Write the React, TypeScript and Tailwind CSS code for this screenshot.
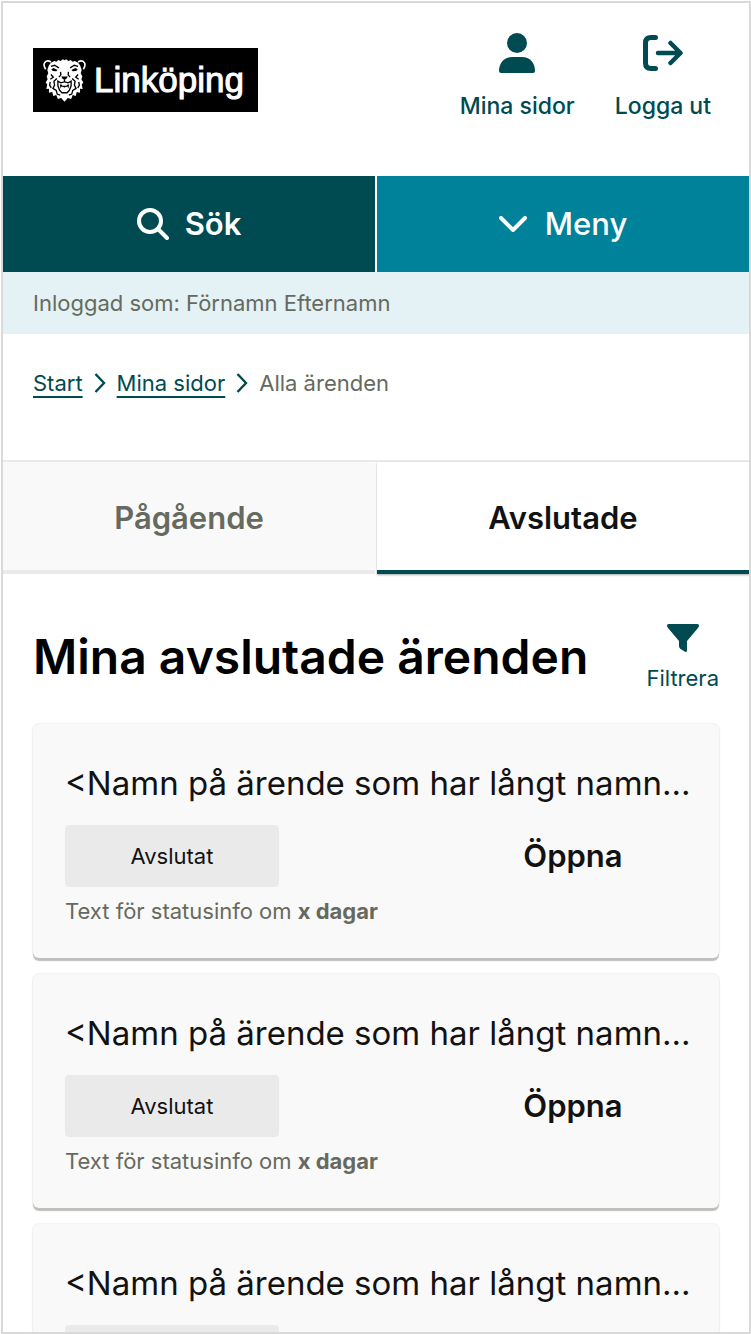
import React from 'react';

const cases = [
  { id: 1, name: '<Namn på ärende som har långt namn...', status: 'Avslutat', days: 'x dagar' },
  { id: 2, name: '<Namn på ärende som har långt namn...', status: 'Avslutat', days: 'x dagar' },
  { id: 3, name: '<Namn på ärende som har långt namn...', status: 'Avslutat', days: 'x dagar' },
];

function LionMark() {
  return (
    <svg viewBox="0 0 130 128" className="h-[43px] w-[43px] shrink-0" aria-hidden="true">
      <path fill="none" stroke="#fff" strokeWidth="5" d="M8 30 Q0 18 5 10 Q12 1 24 8 M122 30 Q130 18 125 10 Q118 1 106 8" />
      <path
        fill="#fff"
        d="M24 10 L34 5 L41 7 L46 2 L53 5 L60 0 L65 3 L70 0 L77 5 L84 2 L89 7 L96 5 L106 10 L112 18 L117 32 L114 42 L119 52 L116 60 L122 70 L117 76 L120 90 L112 89 L112 101 L102 99 L99 111 L90 108 L85 120 L75 117 L65 128 L55 117 L45 120 L40 108 L31 111 L28 99 L18 101 L18 89 L10 90 L13 76 L8 70 L14 60 L11 52 L16 42 L13 32 L18 18Z"
      />
      <g fill="none" stroke="#000" strokeWidth="4">
        <path d="M24 21 L35 18 L48 26 M106 21 L95 18 L82 26" />
        <path d="M53 38 L54 47 L48 54 M77 38 L76 47 L82 54" />
        <path d="M24 46 L31 54 L22 60 M106 46 L99 54 L108 60" />
        <path d="M42 58 L33 66 L35 78 L30 88 L40 94 L43 105 L52 108" />
        <path d="M88 58 L97 66 L95 78 L100 88 L90 94 L87 105 L78 108" />
        <path d="M22 68 L20 78 L25 86 M108 68 L110 78 L105 86" />
        <path d="M65 60 V68 L54 71 L45 66 L45 80 L50 93 L57 101 H73 L80 93 L85 80 L85 66 L76 71 L65 68" />
      </g>
      <path d="M25 30 L32 26 L44 32 L40 36 L30 35Z M105 30 L98 26 L86 32 L90 36 L100 35Z" />
      <path d="M55 52 H75 L71 59 L65 62 L59 59Z" />
      <path d="M51 76 H56 L59 80 H71 L74 76 H79 L77 88 L74 82 L65 85 L56 82 L53 88Z" />
    </svg>
  );
}

function UserIcon() {
  return (
    <svg viewBox="0 0 36 40" className="h-10 w-9" fill="currentColor" aria-hidden="true">
      <circle cx="18" cy="10" r="10" />
      <path d="M13 24 H23 C31 24 36 30 36 38 Q36 40 34 40 H2 Q0 40 0 38 C0 30 5 24 13 24Z" />
    </svg>
  );
}

function LogoutIcon() {
  return (
    <svg viewBox="0 0 40 40" className="size-10" fill="none" stroke="currentColor" strokeLinecap="round" strokeLinejoin="round" aria-hidden="true">
      <path strokeWidth="5" d="M12.5 4.5 H8 Q2.500 4.500 2.500 10 V30 Q2.500 35.500 8 35.500 H12.500" />
      <path strokeWidth="4.500" d="M15 20 H36 M27.500 10 L37.500 20 L27.500 30" />
    </svg>
  );
}

function ChevronRight() {
  return (
    <svg viewBox="0 0 12 20" className="h-5 w-3 shrink-0 text-[#004b52]" fill="none" stroke="currentColor" strokeWidth="2.400" aria-hidden="true">
      <path d="M1.500 1 L10 10 L1.500 19" />
    </svg>
  );
}

function CaseCard({ name, status, days }: { name: string; status: string; days: string }) {
  return (
    <li className="rounded-md bg-[#f9f9f9] pt-[35px] pr-6 pb-[31px] pl-8 shadow-[0_3px_1px_#bfc0bb,0_0_2px_rgba(0,0,0,0.16)]">
      <h2 className="truncate text-[33px] leading-[48px] text-[#121212]">{name}</h2>
      <div className="mt-[18px] grid grid-cols-[214px_1fr] items-center">
        <span className="flex h-[62px] items-center justify-center rounded-sm bg-[#eaeaea] text-[22px] text-[#121212]">{status}</span>
        <button type="button" className="ml-[172px] justify-self-center text-[31px] leading-10 font-semibold text-[#121212]">
          Öppna
        </button>
      </div>
      <p className="mt-2 text-[22px] leading-8 text-[#666a5e]">
        Text för statusinfo om <strong className="font-bold">{days}</strong>
      </p>
    </li>
  );
}

const crumbLink = 'text-[#004b52] underline decoration-2 underline-offset-[5px] [text-decoration-skip-ink:none]';

export default function App() {
  return (
    <div className="h-screen bg-white pt-px pl-px font-['Inter',sans-serif]">
      <div className="h-full overflow-y-auto border-2 border-[#d9d9d9] [scrollbar-width:none]">
        <header>
          <div className="flex h-[173px] items-start justify-between pr-[38px] pl-[30px]">
            <a href="#start" className="mt-[45px] flex h-16 items-center gap-2 bg-black pr-[14px] pl-[10px]">
              <LionMark />
              <span className="font-['Liberation_Sans',sans-serif] text-[35px] text-white [-webkit-text-stroke:1px_white]">Linköping</span>
            </a>
            <div className="mt-[30px] flex gap-10 text-[23px] leading-[34px] font-medium text-[#004b52]">
              <a href="#mina-sidor" className="flex flex-col items-center gap-4">
                <UserIcon />
                Mina sidor
              </a>
              <a href="#logga-ut" className="flex flex-col items-center gap-4">
                <LogoutIcon />
                Logga ut
              </a>
            </div>
          </div>
          <nav className="grid h-24 grid-cols-2 gap-0.5 text-[31px] text-white">
            <button type="button" className="flex items-center justify-center gap-4 bg-[#004b52] font-semibold">
              <svg viewBox="0 0 32 32" className="size-8" fill="none" stroke="currentColor" strokeWidth="4" strokeLinecap="round" aria-hidden="true">
                <circle cx="13" cy="13" r="11" />
                <path d="M21 21 L30 30" />
              </svg>
              Sök
            </button>
            <button type="button" className="flex items-center justify-center gap-[18px] bg-[#00829b] font-medium">
              <svg viewBox="0 0 28 16" className="h-4 w-7" fill="none" stroke="currentColor" strokeWidth="4" strokeLinecap="round" strokeLinejoin="round" aria-hidden="true">
                <path d="M2 2 L14 14 L26 2" />
              </svg>
              Meny
            </button>
          </nav>
          <p className="flex h-[62px] items-center bg-[#e4f1f5] px-[30px] text-[22px] text-[#666a5e]">Inloggad som: Förnamn Efternamn</p>
        </header>

        <nav aria-label="Brödsmulor" className="h-[126px] px-[30px] pt-8 text-[22px] text-[#666a5e]">
          <div className="flex h-[34px] items-center gap-[11px]">
            <a href="#start" className={crumbLink}>Start</a>
            <ChevronRight />
            <a href="#mina-sidor" className={crumbLink}>Mina sidor</a>
            <ChevronRight />
            <span>Alla ärenden</span>
          </div>
        </nav>

        <div role="tablist" className="grid grid-cols-2 gap-0.5 border-t-2 border-[#eaeaea] text-[31px] font-semibold">
          <button type="button" role="tab" aria-selected="false" className="h-28 border-b-4 border-[#eaeaea] bg-[#f9f9f9] pt-1 text-[#666a5e]">
            Pågående
          </button>
          <button type="button" role="tab" aria-selected="true" className="h-28 border-b-4 border-[#004b52] bg-white pt-1 text-[#121212] shadow-[0_1px_2px_rgba(0,0,0,0.35)]">
            Avslutade
          </button>
        </div>

        <main className="px-[30px] pt-12">
          <div className="flex h-[102px] items-start justify-between">
            <h1 className="text-5xl leading-[70px] font-semibold text-black">Mina avslutade ärenden</h1>
            <button type="button" className="mt-0.5 flex flex-col items-center gap-[10px] text-[22px] leading-8 text-[#004b52]">
              <svg viewBox="0 0 32 28" className="h-7 w-8" fill="currentColor" aria-hidden="true">
                <path d="M1.500 0 H30.500 Q32 0 32 1.500 Q32 2.500 31 4 L20 17 V26.500 Q20 28 18.500 28 L13.500 25 Q12 24 12 22 V17 L1 4 Q0 2.500 0 1.500 Q0 0 1.500 0Z" />
              </svg>
              Filtrera
            </button>
          </div>
          <ul className="flex flex-col gap-4">
            {cases.map((c) => (
              <CaseCard key={c.id} name={c.name} status={c.status} days={c.days} />
            ))}
          </ul>
        </main>
      </div>
    </div>
  );
}
